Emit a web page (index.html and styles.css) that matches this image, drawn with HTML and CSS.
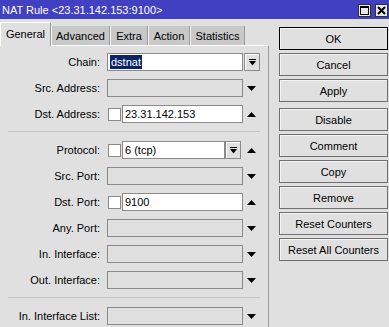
FILE: index.html
```
<!DOCTYPE html>
<html>
<head>
<meta charset="utf-8">
<link rel="stylesheet" href="styles.css">
</head>
<body>
<div class="titlebar">
  <span class="title">NAT Rule &lt;23.31.142.153:9100&gt;</span>
  <div class="tbtns">
    <span class="tbtn"><svg width="9" height="9" viewBox="0 0 9 9"><rect x="0.5" y="0.5" width="8" height="8" fill="none" stroke="#000"/><rect x="0" y="0" width="9" height="2" fill="#000"/></svg></span>
    <span class="tbtn"><svg width="9" height="9" viewBox="0 0 9 9"><path d="M1 1 L8 8 M8 1 L1 8" stroke="#000" stroke-width="2"/></svg></span>
  </div>
</div>
<div class="main">
  <div class="left">
    <div class="tabs">
      <div class="tab active w1">General</div>
      <div class="tab w2">Advanced</div>
      <div class="tab w3">Extra</div>
      <div class="tab w4">Action</div>
      <div class="tab w5">Statistics</div>
    </div>
    <div class="panel">
      <div class="row">
        <span class="lbl">Chain:</span>
        <span class="field"><span class="sel">dstnat</span></span>
        <span class="ddbtn"><svg width="7" height="7" viewBox="0 0 7 7"><rect x="0" y="0" width="7" height="1" fill="#000"/><path d="M0 2 H7 L3.5 6.5 Z" fill="#000"/></svg></span>
      </div>
      <div class="row">
        <span class="lbl">Src. Address:</span>
        <span class="field dis"></span>
        <span class="arr"><svg width="9" height="5" viewBox="0 0 9 5"><path d="M0 0 H9 L4.5 5 Z" fill="#000"/></svg></span>
      </div>
      <div class="row">
        <span class="lbl">Dst. Address:</span>
        <span class="cb"></span>
        <span class="field short">23.31.142.153</span>
        <span class="arr"><svg width="9" height="5" viewBox="0 0 9 5"><path d="M0 5 H9 L4.5 0 Z" fill="#000"/></svg></span>
      </div>
      <div class="sep"></div>
      <div class="row">
        <span class="lbl">Protocol:</span>
        <span class="cb"></span>
        <span class="field proto">6 (tcp)</span>
        <span class="ddbtn pbtn"><svg width="7" height="7" viewBox="0 0 7 7"><rect x="0" y="0" width="7" height="1" fill="#000"/><path d="M0 2 H7 L3.5 6.5 Z" fill="#000"/></svg></span>
        <span class="arr parr"><svg width="9" height="5" viewBox="0 0 9 5"><path d="M0 5 H9 L4.5 0 Z" fill="#000"/></svg></span>
      </div>
      <div class="row">
        <span class="lbl">Src. Port:</span>
        <span class="field dis"></span>
        <span class="arr"><svg width="9" height="5" viewBox="0 0 9 5"><path d="M0 0 H9 L4.5 5 Z" fill="#000"/></svg></span>
      </div>
      <div class="row">
        <span class="lbl">Dst. Port:</span>
        <span class="cb"></span>
        <span class="field short">9100</span>
        <span class="arr"><svg width="9" height="5" viewBox="0 0 9 5"><path d="M0 5 H9 L4.5 0 Z" fill="#000"/></svg></span>
      </div>
      <div class="row">
        <span class="lbl">Any. Port:</span>
        <span class="field dis"></span>
        <span class="arr"><svg width="9" height="5" viewBox="0 0 9 5"><path d="M0 0 H9 L4.5 5 Z" fill="#000"/></svg></span>
      </div>
      <div class="row">
        <span class="lbl">In. Interface:</span>
        <span class="field dis"></span>
        <span class="arr"><svg width="9" height="5" viewBox="0 0 9 5"><path d="M0 0 H9 L4.5 5 Z" fill="#000"/></svg></span>
      </div>
      <div class="row">
        <span class="lbl">Out. Interface:</span>
        <span class="field dis"></span>
        <span class="arr"><svg width="9" height="5" viewBox="0 0 9 5"><path d="M0 0 H9 L4.5 5 Z" fill="#000"/></svg></span>
      </div>
      <div class="sep"></div>
      <div class="row">
        <span class="lbl">In. Interface List:</span>
        <span class="field dis"></span>
        <span class="arr"><svg width="9" height="5" viewBox="0 0 9 5"><path d="M0 0 H9 L4.5 5 Z" fill="#000"/></svg></span>
      </div>
    </div>
  </div>
  <div class="buttons">
    <div class="btn default">OK</div>
    <div class="btn">Cancel</div>
    <div class="btn">Apply</div>
    <div class="btn gap">Disable</div>
    <div class="btn">Comment</div>
    <div class="btn">Copy</div>
    <div class="btn">Remove</div>
    <div class="btn">Reset Counters</div>
    <div class="btn">Reset All Counters</div>
  </div>
</div>
</body>
</html>
```
FILE: styles.css
```
* { box-sizing: border-box; }
html, body { margin: 0; padding: 0; }
body {
  width: 389px;
  height: 327px;
  overflow: hidden;
  background: #e0e0e0;
  font-family: "Liberation Sans", Arial, sans-serif;
  font-size: 11px;
  color: #000;
}
.titlebar {
  height: 19px;
  background: #4040c0;
  color: #fff;
  display: flex;
  align-items: center;
  justify-content: space-between;
  padding-left: 2px;
}
.title { font-size: 11px; }
.tbtns { display: flex; gap: 4px; margin-right: 1px; margin-top: 2px; }
.tbtn {
  width: 13px;
  height: 13px;
  background: #e8e8e8;
  border: 1px solid #303030;
  display: flex;
  align-items: center;
  justify-content: center;
}
.main { display: flex; }
.left { width: 269px; padding-top: 3px; }
.tabs { display: flex; align-items: flex-end; height: 23px; }
.tab {
  height: 19px;
  background: #c8c8c8;
  border-left: 1px solid #f4f4f4;
  border-right: 1px solid #9a9a9a;
  display: flex;
  align-items: center;
  justify-content: center;
}
.tab.active {
  height: 24px;
  margin-bottom: -1px;
  background: #e0e0e0;
  border-left: 1px solid #fff;
  border-top: 1px solid #fff;
  border-right: 1px solid #9a9a9a;
  position: relative;
  z-index: 1;
  padding-bottom: 2px;
}
.w1 { width: 51px; }
.w2 { width: 59px; }
.w3 { width: 38px; }
.w4 { width: 42px; }
.w5 { width: 55px; }
.panel {
  border-top: 1px solid #fff;
  border-right: 1px solid #9a9a9a;
  height: 282px;
  padding-top: 7px;
}
.row { display: flex; align-items: center; height: 18px; margin-bottom: 8px; }
.lbl { width: 100px; margin-right: 7px; text-align: right; white-space: nowrap; }
.field {
  width: 136px;
  height: 18px;
  background: #fff;
  border: 1px solid #8a8a8a;
  padding-left: 2px;
  line-height: 16px;
  white-space: nowrap;
}
.field.dis { background: #e0e0e0; }
.field.short { width: 121px; }
.field.proto { width: 103px; }
.sel { background: #0a246a; color: #fff; display: inline-block; line-height: 14px; padding: 0 1px; }
.cb {
  width: 13px;
  height: 13px;
  background: #fff;
  border: 1px solid #8a8a8a;
  margin-left: 1px;
  margin-right: 1px;
}
.ddbtn {
  width: 16px;
  height: 18px;
  margin-left: 1px;
  border: 1px solid #8a8a8a;
  box-shadow: inset 1px 1px #fff;
  background: #e0e0e0;
  display: flex;
  align-items: center;
  justify-content: center;
}
.pbtn { margin-left: 0; }
.arr { margin-left: 4px; width: 9px; height: 5px; display: flex; }
.parr { margin-left: 6px; }
.sep { height: 1px; background: #c4c4c4; margin: 0 8px 9px 8px; }
.buttons { margin-left: 10px; width: 109px; padding-top: 8px; }
.btn {
  height: 23px;
  margin-bottom: 3px;
  border: 1px solid #6e6e6e;
  box-shadow: inset 1px 1px #f4f4f4;
  background: #e0e0e0;
  display: flex;
  align-items: center;
  justify-content: center;
  white-space: nowrap;
}
.btn.default { border-color: #000; }
.btn.gap { margin-top: 6px; }
```
